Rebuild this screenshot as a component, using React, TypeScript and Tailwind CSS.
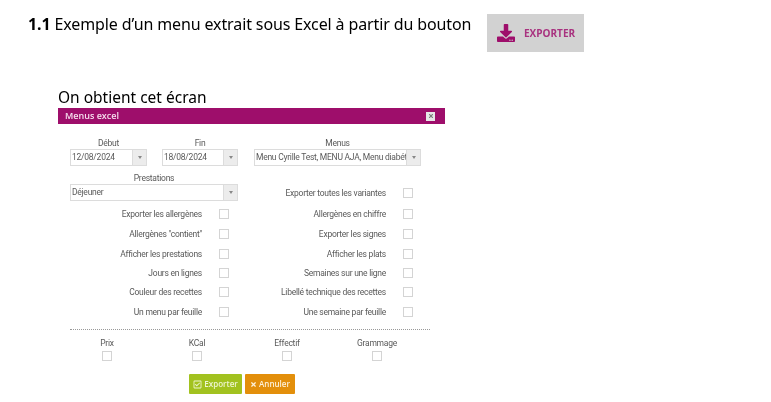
import { FaDownload, FaRegCheckSquare, FaTimes } from "react-icons/fa";

const left = ["Exporter les allergènes", "Allergènes \"contient\"", "Afficher les prestations", "Jours en lignes", "Couleur des recettes", "Un menu par feuille"];
const right = ["Allergènes en chiffre", "Exporter les signes", "Afficher les plats", "Semaines sur une ligne", "Libellé technique des recettes", "Une semaine par feuille"];
const rowHeights = ["h-[20px]", "h-[20px]", "h-[19px]", "h-[19px]", "h-[20px]", "h-[19px]"];

function Box() {
  return <span className="block w-[10px] h-[10px] shrink-0 border border-[#d4d4d4] bg-white" />;
}

function Option({ label, width }: { label: string; width: string }) {
  return (
    <div className={`flex items-center ${width}`}>
      <span className="flex-1 pt-[1px] text-right text-[8.5px] tracking-[-0.25px] text-[#5a5a5a]">{label}</span>
      <span className="ml-[17px]"><Box /></span>
    </div>
  );
}

function Select({ value, width }: { value: string; width: string }) {
  return (
    <div className={`flex h-[17px] border border-[#dcdcdc] bg-white ${width}`}>
      <span className="flex-1 min-w-0 overflow-hidden whitespace-nowrap pl-[1px] text-[8.5px] leading-[15px] tracking-[-0.25px] text-[#5a5a5a]">{value}</span>
      <span className="flex w-[14px] shrink-0 items-center justify-center border-l border-[#dcdcdc] bg-[#ececec]">
        <span className="block h-0 w-0 border-x-[2.5px] border-t-[3px] border-x-transparent border-t-[#888]" />
      </span>
    </div>
  );
}

export default function App() {
  return (
    <div className="h-[402px] w-[771px] overflow-hidden bg-white font-['Roboto',sans-serif] pt-[14px] blur-[0.35px]">
      <div className="flex h-[38px] items-start pl-[28px]">
        <p className="w-[459px] whitespace-nowrap text-[16px] leading-[21px] tracking-[-0.12px] text-black font-['Noto_Sans',sans-serif]">
          <b>1.1</b> Exemple d’un menu extrait sous Excel à partir du bouton
        </p>
        <div className="flex h-[38px] w-[97px] items-center bg-[#d2d2d2] pl-[10px]">
          <FaDownload className="h-[18px] w-[18px] text-[#9e0e6b]" />
          <span className="ml-[9px] font-['Open_Sans',sans-serif] text-[10px] font-bold text-[#a8327f]">EXPORTER</span>
        </div>
      </div>
      <p className="ml-[58px] mt-[34px] h-[22px] text-[15.5px] leading-[22px] text-black font-['Noto_Sans',sans-serif]">On obtient cet écran</p>
      <div className="ml-[58px] w-[387px]">
        <div className="flex h-[16px] items-center justify-between bg-[#9e0e6b] pl-[7px] pr-[10px]">
          <span className="font-['Open_Sans',sans-serif] text-[9px] font-semibold text-[#f6dfee]">Menus excel</span>
          <span className="flex h-[9px] w-[9px] items-center justify-center bg-[#e6e6e6]">
            <FaTimes className="h-[6px] w-[6px] text-[#777]" />
          </span>
        </div>
        <div className="pl-[12px] pt-[13px]">
          <div className="flex">
            <div className="w-[92px]">
              <div className="h-[12px] w-[77px] text-center text-[8.5px] leading-[13px] tracking-[-0.25px] text-[#5a5a5a]">Début</div>
              <Select value="12/08/2024" width="w-[77px]" />
            </div>
            <div className="w-[92px]">
              <div className="h-[12px] w-[76px] text-center text-[8.5px] leading-[13px] tracking-[-0.25px] text-[#5a5a5a]">Fin</div>
              <Select value="18/08/2024" width="w-[76px]" />
            </div>
            <div>
              <div className="h-[12px] w-[167px] text-center text-[8.5px] leading-[13px] tracking-[-0.25px] text-[#5a5a5a]">Menus</div>
              <Select value="Menu Cyrille Test, MENU AJA, Menu diabétique" width="w-[167px]" />
            </div>
          </div>
          <div className="mt-[6px] flex">
            <div className="w-[184px]">
              <div className="h-[12px] w-[168px] text-center text-[8.5px] leading-[13px] tracking-[-0.25px] text-[#5a5a5a]">Prestations</div>
              <Select value="Déjeuner" width="w-[168px]" />
            </div>
            <div className="pt-[14px]">
              <Option label="Exporter toutes les variantes" width="w-[159px]" />
            </div>
          </div>
          <div className="mt-[3px] flex">
            <div className="flex w-[184px] flex-col">
              {left.map((l, i) => (
                <div key={l} className={`flex items-center ${rowHeights[i]}`}>
                  <Option label={l} width="w-[159px]" />
                </div>
              ))}
            </div>
            <div className="flex flex-col">
              {right.map((l, i) => (
                <div key={l} className={`flex items-center ${rowHeights[i]}`}>
                  <Option label={l} width="w-[159px]" />
                </div>
              ))}
            </div>
          </div>
          <div className="mt-[8px] w-[360px] border-t border-dotted border-[#999]" />
          <div className="mt-[7px] -ml-[8px] grid w-[360px] grid-cols-4">
            {["Prix", "KCal", "Effectif", "Grammage"].map((l) => (
              <div key={l} className="flex flex-col items-center">
                <span className="h-[14px] text-[8.5px] leading-[12px] tracking-[-0.25px] text-[#5a5a5a]">{l}</span>
                <Box />
              </div>
            ))}
          </div>
          <div className="mt-[13px] ml-[119px] flex gap-[3px]">
            <div className="flex h-[20px] w-[53px] items-center justify-center gap-[2px] rounded-[1px] bg-[#a2c21f] font-['Open_Sans',sans-serif] text-[8px] font-semibold text-[#eef5d0]">
              <FaRegCheckSquare className="h-[9px] w-[9px]" />Exporter
            </div>
            <div className="flex h-[20px] w-[50px] items-center justify-center gap-[2px] rounded-[1px] bg-[#e38f0b] font-['Open_Sans',sans-serif] text-[8px] font-semibold text-[#fdf0d8]">
              <FaTimes className="h-[7px] w-[7px]" />Annuler
            </div>
          </div>
        </div>
      </div>
    </div>
  );
}
